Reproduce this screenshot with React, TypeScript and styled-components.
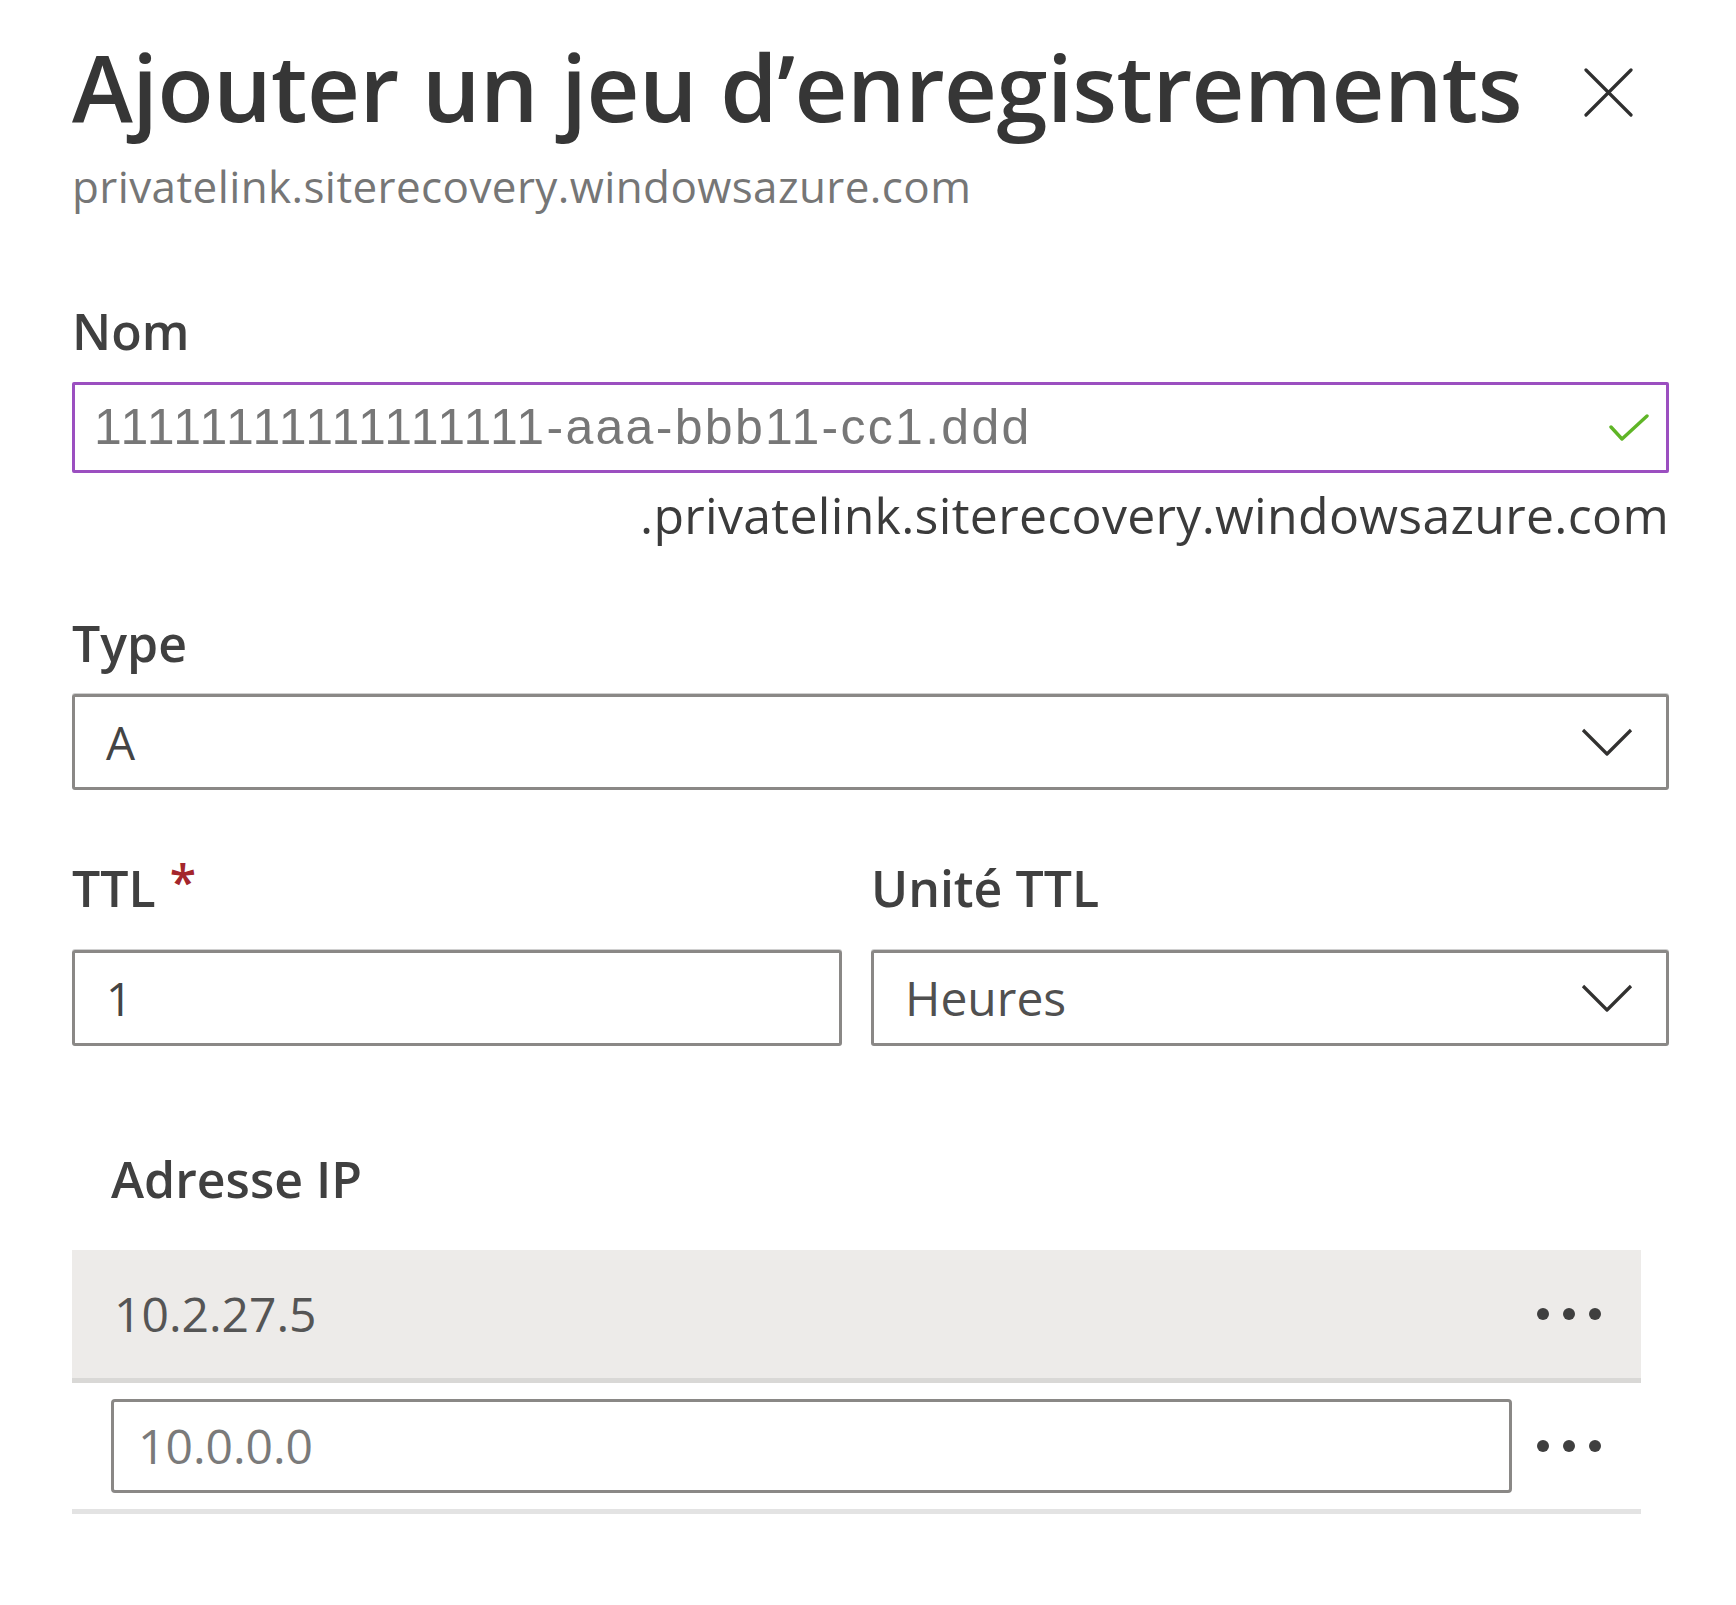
import React from 'react';
import styled, { createGlobalStyle } from 'styled-components';

const GlobalStyle = createGlobalStyle`
  body {
    margin: 0;
    background: #ffffff;
    font-family: "Open Sans", "Noto Sans", sans-serif;
    color: #3b3a39;
  }
`;

const Panel = styled.div`
  padding: 37px 67px 80px 72px;
  display: flex;
  flex-direction: column;
`;

const Header = styled.div`
  display: flex;
  justify-content: space-between;
  align-items: flex-start;
`;

const Title = styled.h1`
  margin: 0;
  font-size: 92px;
  line-height: 100px;
  font-weight: 600;
  letter-spacing: -0.5px;
  color: #363636;
  white-space: nowrap;
`;

const CloseButton = styled.button`
  margin: 31px 36px 0 0;
  padding: 0;
  border: none;
  background: none;
  width: 49px;
  height: 49px;
  display: flex;
`;

const Subtitle = styled.div`
  margin-top: 26px;
  font-size: 44px;
  line-height: 46px;
  letter-spacing: 0.4px;
  color: #767676;
`;

const Label = styled.div<{ $top: number; $indent?: number }>`
  margin-top: ${p => p.$top}px;
  padding-left: ${p => p.$indent || 0}px;
  font-size: 50px;
  line-height: 60px;
  font-weight: 600;
  color: #404040;
  display: flex;
  gap: 14px;
`;

const Required = styled.span`
  color: #a4262c;
  font-size: 48px;
  line-height: 48px;
`;

const TextBox = styled.div<{ $focused?: boolean }>`
  margin-top: 21px;
  box-sizing: border-box;
  height: 91px;
  border: 3px solid ${p => (p.$focused ? '#9b4fc0' : '#8a8886')};
  border-radius: 2px;
  display: flex;
  align-items: center;
  justify-content: space-between;
  padding: 0 17px 0 19px;
`;

const NameValue = styled.span`
  font-family: "Liberation Sans", Arial, sans-serif;
  font-size: 50px;
  line-height: 85px;
  letter-spacing: 2.3px;
  color: #777777;
`;

const Suffix = styled.div`
  margin-top: 15px;
  text-align: right;
  font-size: 50px;
  line-height: 54px;
  font-weight: 500;
  letter-spacing: 0.3px;
  color: #3b3b3b;
`;

const Dropdown = styled.div<{ $top?: number }>`
  margin-top: ${p => p.$top ?? 21}px;
  box-sizing: border-box;
  height: 96px;
  border: 3px solid #8a8886;
  border-radius: 3px;
  box-shadow: 0 -1px 0 #d0d0d0;
  display: flex;
  align-items: center;
  justify-content: space-between;
  padding: 0 33px 0 31px;
`;

const Value = styled.span<{ $muted?: boolean }>`
  font-size: ${p => (p.$muted ? 48 : 46)}px;
  line-height: 60px;
  color: ${p => (p.$muted ? '#505050' : '#444444')};
`;

const TtlRow = styled.div`
  display: grid;
  grid-template-columns: 770px 1fr;
  column-gap: 29px;
`;

const Column = styled.div`
  display: flex;
  flex-direction: column;
`;

const IpTable = styled.div`
  margin-top: 41px;
  margin-right: 28px;
  display: flex;
  flex-direction: column;
`;

const IpRow = styled.div<{ $filled?: boolean; $height: number }>`
  box-sizing: border-box;
  display: grid;
  grid-template-columns: 1fr 129px;
  align-items: center;
  height: ${p => p.$height}px;
  padding-left: 39px;
  background: ${p => (p.$filled ? '#edebe9' : '#ffffff')};
  border-bottom: 5px solid ${p => (p.$filled ? '#d9d8d6' : '#e3e3e3')};
`;

const IpText = styled.span`
  padding-left: 3px;
  font-size: 48px;
  line-height: 60px;
  color: #555555;
`;

const IpInput = styled.div`
  box-sizing: border-box;
  height: 94px;
  border: 3px solid #8a8886;
  border-radius: 4px;
  display: flex;
  align-items: center;
  padding-left: 24px;
`;

const Placeholder = styled.span`
  font-size: 48px;
  line-height: 60px;
  color: #7a7a7a;
`;

const MoreButton = styled.div`
  display: flex;
  justify-content: flex-end;
  gap: 14px;
  padding-right: 40px;
`;

const Dot = styled.span`
  width: 12px;
  height: 12px;
  border-radius: 50%;
  background: #3f3f3f;
`;

const CloseIcon = () => (
  <svg width="49" height="49" viewBox="0 0 49 49">
    <path d="M2 2 L47 47 M47 2 L2 47" stroke="#2f2f2f" strokeWidth="3.2" strokeLinecap="round" />
  </svg>
);

const Chevron = () => (
  <svg width="52" height="28" viewBox="0 0 52 28">
    <polyline points="2,2 26,26 50,2" fill="none" stroke="#323130" strokeWidth="3.2" strokeLinejoin="round" />
  </svg>
);

const Check = () => (
  <svg width="40" height="28" viewBox="0 0 40 28">
    <polyline points="2,13 13,25 38,2" fill="none" stroke="#5fb526" strokeWidth="3.4" strokeLinecap="round" strokeLinejoin="round" />
  </svg>
);

const More = () => (
  <MoreButton>
    <Dot />
    <Dot />
    <Dot />
  </MoreButton>
);

export default function App() {
  return (
    <>
      <GlobalStyle />
      <Panel>
        <Header>
          <Title>Ajouter un jeu d’enregistrements</Title>
          <CloseButton aria-label="Fermer">
            <CloseIcon />
          </CloseButton>
        </Header>
        <Subtitle>privatelink.siterecovery.windowsazure.com</Subtitle>

        <Label $top={92}>Nom</Label>
        <TextBox $focused>
          <NameValue>11111111111111111-aaa-bbb11-cc1.ddd</NameValue>
          <Check />
        </TextBox>
        <Suffix>.privatelink.siterecovery.windowsazure.com</Suffix>

        <Label $top={71}>Type</Label>
        <Dropdown>
          <Value>A</Value>
          <Chevron />
        </Dropdown>

        <TtlRow>
          <Column>
            <Label $top={68}>
              TTL <Required>*</Required>
            </Label>
            <Dropdown $top={32}>
              <Value>1</Value>
            </Dropdown>
          </Column>
          <Column>
            <Label $top={68}>Unité TTL</Label>
            <Dropdown $top={32}>
              <Value $muted>Heures</Value>
              <Chevron />
            </Dropdown>
          </Column>
        </TtlRow>

        <Label $top={103} $indent={39}>Adresse IP</Label>
        <IpTable>
          <IpRow $filled $height={133}>
            <IpText>10.2.27.5</IpText>
            <More />
          </IpRow>
          <IpRow $height={131}>
            <IpInput>
              <Placeholder>10.0.0.0</Placeholder>
            </IpInput>
            <More />
          </IpRow>
        </IpTable>
      </Panel>
    </>
  );
}
